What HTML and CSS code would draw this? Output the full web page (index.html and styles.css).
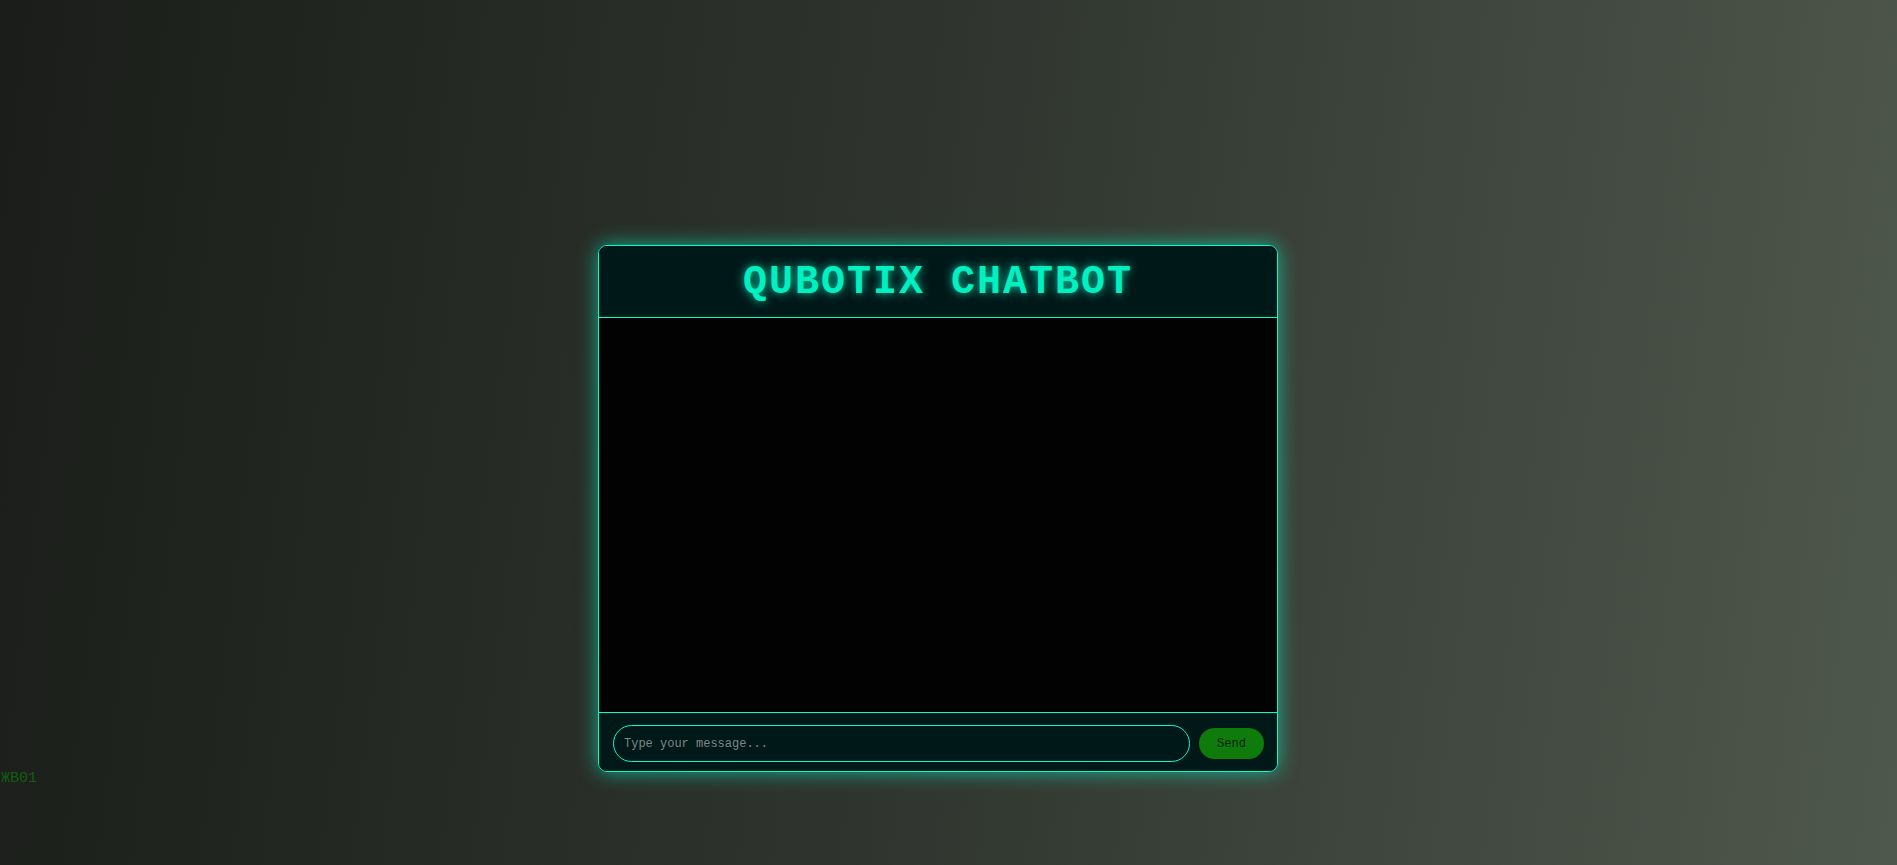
FILE: index.html
```html
<!DOCTYPE html>
<html lang="en">
<head>
<meta charset="utf-8">
<title>Qubotix Chatbot</title>
<link rel="stylesheet" href="styles.css">
</head>
<body>
<div class="page">
  <div class="chat">
    <div class="chat-header">
      <h1 class="chat-title">QUBOTIX CHATBOT</h1>
    </div>
    <div class="chat-messages"></div>
    <div class="chat-input">
      <input class="msg-input" type="text" placeholder="Type your message...">
      <button class="send-btn">Send</button>
    </div>
  </div>
  <span class="rain">ЖB01</span>
</div>
</body>
</html>
```

FILE: styles.css
```css
html {
  background: linear-gradient(97deg, #1a1d19 0%, #2f352e 48%, #4f584d 100%);
  min-height: 100%;
}
::-webkit-scrollbar { width: 5px; background: transparent; }
::-webkit-scrollbar-thumb { background: #2b2e2b; border-radius: 4px; }

body {
  margin: 0;
  font-family: "Liberation Mono", "Courier New", monospace;
}

.page {
  position: relative;
  min-height: 868px;
  box-sizing: border-box;
  padding: 245px 0 0 598px;
}

.chat {
  width: 680px;
  box-sizing: border-box;
  border: 1px solid #00ffcc;
  border-radius: 9px;
  background: #021818;
  box-shadow: 0 0 20px rgba(0, 255, 204, 0.6);
  overflow: hidden;
  display: flex;
  flex-direction: column;
}

.chat-header {
  background: #011819;
  padding: 14px 0 12px;
  border-bottom: 1px solid #00ffcc;
  text-align: center;
}

.chat-title {
  margin: 0;
  font-family: "Liberation Mono", "Courier New", monospace;
  font-size: 40px;
  line-height: 45px;
  font-weight: bold;
  letter-spacing: 2px;
  color: #00f0c2;
  text-shadow: 0 0 10px rgba(0, 255, 204, 0.8);
}

.chat-messages {
  height: 394px;
  background: #020202;
  border-bottom: 1px solid #00ffcc;
}

.chat-input {
  background: #011819;
  display: flex;
  align-items: center;
  gap: 9px;
  padding: 12px 13px 9px 14px;
}

.msg-input {
  flex: 1;
  height: 37px;
  box-sizing: border-box;
  border: 1px solid #00ffcc;
  border-radius: 20px;
  background: #011819;
  color: #cfe;
  padding: 0 10px;
  font-family: "Liberation Mono", "Courier New", monospace;
  font-size: 12px;
  outline: none;
}
.msg-input::placeholder { color: #7b8886; }

.send-btn {
  width: 65px;
  height: 31px;
  border: none;
  border-radius: 16px;
  background: #0f7b0a;
  color: #0a200a;
  font-family: "Liberation Mono", "Courier New", monospace;
  font-size: 12px;
  padding: 0;
}

.rain {
  position: absolute;
  left: 1px;
  top: 770px;
  font-family: "Liberation Mono", "Courier New", monospace;
  font-size: 15px;
  color: #0d6a0d;
  opacity: 0.85;
}
```
